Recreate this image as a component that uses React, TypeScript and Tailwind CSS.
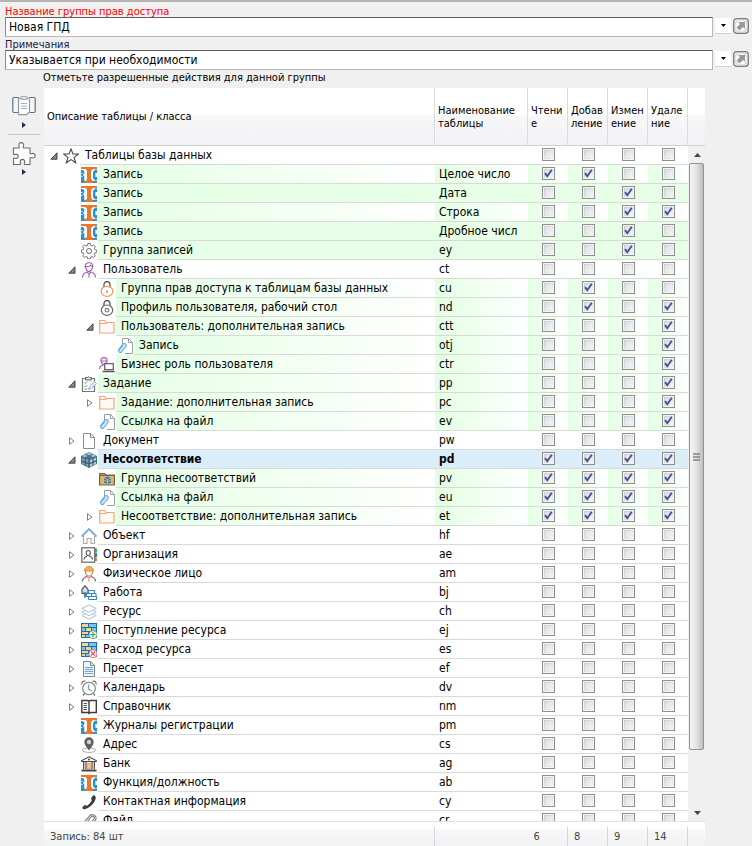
import React, { useState } from 'react';

type IconName =
  | 'star' | 'record' | 'gear' | 'user' | 'lockOpen' | 'lockGear' | 'folder' | 'clipFile'
  | 'role' | 'task' | 'document' | 'cubes' | 'cubeFolder' | 'house' | 'contact' | 'worker'
  | 'work' | 'layers' | 'brickAdd' | 'brickRemove' | 'preset' | 'clock' | 'book' | 'pin'
  | 'bank' | 'phone' | 'clip';

type Fill = 'none' | 'fade' | 'solid' | 'selected';

interface Row {
  level: number;
  node?: 'open' | 'closed';
  icon: IconName;
  name: string;
  code: string;
  checks: string;
  fill?: Fill;
}

const rows: Row[] = [
  { level: 0, node: 'open', icon: 'star', name: 'Таблицы базы данных', code: '', checks: '0000' },
  { level: 1, icon: 'record', name: 'Запись', code: 'Целое число', checks: '1100', fill: 'fade' },
  { level: 1, icon: 'record', name: 'Запись', code: 'Дата', checks: '0010', fill: 'solid' },
  { level: 1, icon: 'record', name: 'Запись', code: 'Строка', checks: '0011', fill: 'fade' },
  { level: 1, icon: 'record', name: 'Запись', code: 'Дробное числ', checks: '0010', fill: 'solid' },
  { level: 1, icon: 'gear', name: 'Группа записей', code: 'ey', checks: '0010', fill: 'solid' },
  { level: 1, node: 'open', icon: 'user', name: 'Пользователь', code: 'ct', checks: '0000' },
  { level: 2, icon: 'lockOpen', name: 'Группа прав доступа к таблицам базы данных', code: 'cu', checks: '0100', fill: 'fade' },
  { level: 2, icon: 'lockGear', name: 'Профиль пользователя, рабочий стол', code: 'nd', checks: '0101', fill: 'fade' },
  { level: 2, node: 'open', icon: 'folder', name: 'Пользователь: дополнительная запись', code: 'ctt', checks: '0001', fill: 'fade' },
  { level: 3, icon: 'clipFile', name: 'Запись', code: 'otj', checks: '0001', fill: 'fade' },
  { level: 2, icon: 'role', name: 'Бизнес роль пользователя', code: 'ctr', checks: '0001', fill: 'fade' },
  { level: 1, node: 'open', icon: 'task', name: 'Задание', code: 'pp', checks: '0001', fill: 'fade' },
  { level: 2, node: 'closed', icon: 'folder', name: 'Задание: дополнительная запись', code: 'pc', checks: '0001', fill: 'fade' },
  { level: 2, icon: 'clipFile', name: 'Ссылка на файл', code: 'ev', checks: '0001', fill: 'fade' },
  { level: 1, node: 'closed', icon: 'document', name: 'Документ', code: 'pw', checks: '0000' },
  { level: 1, node: 'open', icon: 'cubes', name: 'Несоответствие', code: 'pd', checks: '1111', fill: 'selected' },
  { level: 2, icon: 'cubeFolder', name: 'Группа несоответствий', code: 'pv', checks: '1111', fill: 'fade' },
  { level: 2, icon: 'clipFile', name: 'Ссылка на файл', code: 'eu', checks: '1111', fill: 'fade' },
  { level: 2, node: 'closed', icon: 'folder', name: 'Несоответствие: дополнительная запись', code: 'et', checks: '1111', fill: 'fade' },
  { level: 1, node: 'closed', icon: 'house', name: 'Объект', code: 'hf', checks: '0000' },
  { level: 1, node: 'closed', icon: 'contact', name: 'Организация', code: 'ae', checks: '0000' },
  { level: 1, node: 'closed', icon: 'worker', name: 'Физическое лицо', code: 'am', checks: '0000' },
  { level: 1, node: 'closed', icon: 'work', name: 'Работа', code: 'bj', checks: '0000' },
  { level: 1, node: 'closed', icon: 'layers', name: 'Ресурс', code: 'ch', checks: '0000' },
  { level: 1, node: 'closed', icon: 'brickAdd', name: 'Поступление ресурса', code: 'ej', checks: '0000' },
  { level: 1, node: 'closed', icon: 'brickRemove', name: 'Расход ресурса', code: 'es', checks: '0000' },
  { level: 1, node: 'closed', icon: 'preset', name: 'Пресет', code: 'ef', checks: '0000' },
  { level: 1, node: 'closed', icon: 'clock', name: 'Календарь', code: 'dv', checks: '0000' },
  { level: 1, node: 'closed', icon: 'book', name: 'Справочник', code: 'nm', checks: '0000' },
  { level: 1, icon: 'record', name: 'Журналы регистрации', code: 'pm', checks: '0000' },
  { level: 1, icon: 'pin', name: 'Адрес', code: 'cs', checks: '0000' },
  { level: 1, icon: 'bank', name: 'Банк', code: 'ag', checks: '0000' },
  { level: 1, icon: 'record', name: 'Функция/должность', code: 'ab', checks: '0000' },
  { level: 1, icon: 'phone', name: 'Контактная информация', code: 'cy', checks: '0000' },
  { level: 1, icon: 'clip', name: 'Файл', code: 'cr', checks: '0000' },
];

const actions = ['Чтение', 'Добавление', 'Изменение', 'Удаление'];
const indents = ['w-1', 'w-[22px]', 'w-10', 'w-[58px]'];
const fills: Record<Fill, string> = {
  none: 'bg-white',
  fade: 'bg-linear-to-r from-[#e3ffe3] to-white',
  solid: 'bg-[#e6ffe6]',
  selected: 'bg-[#dbedf8]',
};

const bricks = (
  <>
    <rect x="0" y="0" width="16" height="15" fill="#1670b8" />
    <path d="M1 1h6v3H1zM5 5h5v3H5zM1 12h3v2H1z" fill="#f6d584" />
    <path d="M8 1h7v3H8zM1 5h3v3H1zM11 5h4v3h-4zM8 9h7v2H8zM5 12h6v2H5z" fill="#7cc4ee" />
    <path d="M1 9h6v2H1z" fill="#f6d584" />
  </>
);

const pageClip = (
  <>
    <path d="M5.500 9V.5h6l4 4v11H8" fill="#fff" stroke="#9a9fa6" />
    <path d="M11.500.5v4h4" fill="none" stroke="#9a9fa6" />
    <path d="M1 12.500l5-6.500a2 2 0 0 1 3 2.500L4.500 14a1.600 1.600 0 0 1-2.600-1.800L6 7.500" fill="#d3e8f7" stroke="#62a9df" strokeWidth="1.100" />
  </>
);

const art: Record<IconName, React.ReactNode> = {
  star: <path d="M8 1l2 5h5.400l-4.300 3.400 1.600 5.400L8 11.600l-4.700 3.200 1.600-5.400L.6 6H6z" fill="#fff" stroke="#4a4a4a" strokeWidth="1.100" />,
  record: (
    <>
      <rect width="16" height="16" fill="#e8762c" />
      <path d="M0 2h3.500A2.500 2.500 0 0 1 6 4.500v7A2.500 2.500 0 0 1 3.500 14H0z" fill="#fff" />
      <path d="M0 3h1.500L3.300 4v2.500L2 8l1.300 1.500V14L2 15H0z" fill="#2493d4" />
      <path d="M0 6.500h1.500M0 9.500h1.500" stroke="#fff" strokeWidth=".8" />
      <path d="M16 2h-2.500A3.500 3.500 0 0 0 10 5.500v5a3.500 3.500 0 0 0 3.500 3.500H16z" fill="#fff" />
      <path d="M16 2.500h-2l-2 2.500v6l2 2.500h2V10h-1.600V6H16z" fill="#2493d4" />
      <path d="M0 15h4M12 15h4" stroke="#2493d4" strokeWidth="1.600" />
    </>
  ),
  gear: (
    <>
      <path d="M6.700.8h2.600l.4 2 1.500.6 1.700-1.100 1.800 1.800-1.100 1.700.6 1.500 2 .4v2.600l-2 .4-.6 1.500 1.100 1.700-1.800 1.800-1.700-1.100-1.500.6-.4 2H6.700l-.4-2-1.500-.6-1.700 1.100-1.800-1.800 1.100-1.700-.6-1.500-2-.4V7.700l2-.4.6-1.500-1.100-1.700 1.800-1.800 1.700 1.100 1.500-.6z" transform="translate(.5 -.2) scale(.94)" fill="#fff" stroke="#6b6b6b" />
      <circle cx="8" cy="8" r="2.500" fill="none" stroke="#6b6b6b" />
    </>
  ),
  user: (
    <>
      <path d="M4.500 6.500C3.500 2 5.500.7 8 .7s4.500 1.300 3.500 5.800M4.800 4.500c2 .3 4-.3 4.700-1.300.4.800 1 1.200 1.800 1.300M5 6c.5 2.500 1.700 3.500 3 3.500s2.500-1 3-3.500" fill="none" stroke="#a05fb0" strokeWidth="1.100" />
      <path d="M1.500 15.500c0-3.500 1.500-4.500 4.500-5.500l2 2 2-2c3 1 4.500 2 4.500 5.500M8 12v3.500" fill="none" stroke="#a05fb0" strokeWidth="1.100" />
    </>
  ),
  lockOpen: (
    <>
      <path d="M5 6.500V3.500a3 3 0 0 1 6 0v3" fill="none" stroke="#555" strokeWidth="1.300" />
      <ellipse cx="8" cy="10.300" rx="5.900" ry="5" fill="#fff" stroke="#f09560" strokeWidth="1.200" />
      <path d="M8 9v3" stroke="#f09560" strokeWidth="1.500" />
    </>
  ),
  lockGear: (
    <>
      <path d="M5 6V3.500a3 3 0 0 1 6 0V6" fill="none" stroke="#555" strokeWidth="1.300" />
      <ellipse cx="8" cy="10.200" rx="5.700" ry="5.200" fill="#fff" stroke="#666" strokeWidth="1.200" />
      <circle cx="8" cy="10.200" r="1.800" fill="none" stroke="#777" strokeWidth="1.200" />
    </>
  ),
  folder: (
    <>
      <path d="M.7 14V1.500h4.800l1.500 2h8v10.500z" fill="#fffaf6" stroke="#f2a47a" strokeWidth="1.200" />
      <path d="M1 4.500h5.500l1-1h7" fill="none" stroke="#f2a47a" strokeWidth="1.200" />
    </>
  ),
  clipFile: pageClip,
  role: (
    <>
      <path d="M2 5C1.500 1.500 3 .7 5 .7S8.500 1.500 8 5M2 4h6M2.500 5C3 7 4 7.500 5 7.500S7 7 7.500 5M.5 12c0-2.500 1.500-3.500 4-4" fill="none" stroke="#a05fb0" strokeWidth="1.200" />
      <path d="M5.700 6.700h8.600v6H5.700z" fill="#fff" stroke="#666" strokeWidth="1.300" />
      <path d="M3.500 14.500h12.200" stroke="#555" strokeWidth="1.500" />
    </>
  ),
  task: (
    <>
      <path d="M1.500 2.500h12v13h-12z" fill="#fff" stroke="#777" strokeWidth="1.200" />
      <path d="M4.500 1.500h2l1-1 1 1h2v2.500h-6z" fill="#d8d8d8" stroke="#666" />
      <path d="M3.500 6.500l1 1 1.500-2M3.500 10l1 1 1.500-2M3.500 13h2.500" fill="none" stroke="#4fa858" />
      <path d="M7.500 13.500l1-3 5-5 2 2-5 5z" fill="#dcecf9" stroke="#7ba7d4" strokeWidth=".8" />
    </>
  ),
  document: <path d="M2.500.5h7l4 4v11h-11zM9.500.5v4h4" fill="#fff" stroke="#8c8c8c" />,
  cubes: (
    <>
      <path d="M0 4l8-4 8 4v8l-8 4-8-4z" fill="#4b7489" />
      <path d="M1 4l3-1.500L6.500 4 4 5.200zM5 2l3-1.500L11 2 8 3.200zM9.500 4L12 2.500 15 4l-3 1.300z" fill="#a3c5d5" />
      <path d="M1 6l2.800 1v2.500L1 8.500zM5 7l2.500 1v3L5 10zM1 10l2.800 1v2L1 12zM5 11.500l2.500 1v2.500L5 13.800z" fill="#7fa5b8" />
      <path d="M9 8l2.500-1v2.800L9 11zM12.500 6.500L15 5.700v2.500l-2.500 1zM9 12l2.500-1v2.700L9 15zM12.500 10.500L15 9.700v2.500l-2.500 1z" fill="#b4ced9" />
      <path d="M0 9l8 2.500L16 9M4.400 5v8.500M12 5v8.500M8 6v10" stroke="#2f5062" strokeWidth=".6" fill="none" />
    </>
  ),
  cubeFolder: (
    <>
      <path d="M.6 14V2.600h5L7 4h8.400v10z" fill="#e0b866" stroke="#6f6350" strokeWidth="1.200" />
      <path d="M1 4.500h14" stroke="#6f6350" />
      <path d="M5 7l3.500-1.500L12 7v4.500L8.500 13 5 11.500z" fill="#49728a" />
      <path d="M5 7l3.500 1.500L12 7M8.500 8.500V13M5 9.500l3.500 1 3.500-1" stroke="#c5dbe5" strokeWidth=".7" fill="none" />
    </>
  ),
  house: (
    <>
      <path d="M2.500 8v7.500h3.500v-5h4v5h3.500V8" fill="#fff" stroke="#a9a9a9" strokeWidth="1.100" />
      <path d="M.5 8.500L8 1l7.500 7.500" fill="none" stroke="#78addd" strokeWidth="1.800" />
    </>
  ),
  contact: (
    <>
      <path d="M14 1.500h2v4h-2z" fill="#4cae50" />
      <path d="M14 6h2v4h-2z" fill="#2389d0" />
      <path d="M14 10.500h2V14h-2z" fill="#f08a3c" />
      <rect x=".8" y=".8" width="12.900" height="14.400" fill="#fff" stroke="#666" strokeWidth="1.200" />
      <path d="M3 12.500c0-2 1-2.800 3-3.300M11.500 12.500c0-2-1-2.800-3-3.300M5.200 5.500a2 2 0 0 1 4.100 0c0 2-1 3.200-2 3.200s-2.100-1.200-2.100-3.200z" fill="none" stroke="#555" strokeWidth="1.100" />
    </>
  ),
  worker: (
    <>
      <path d="M4.500 5c-.5 3.500 1.500 5 3.500 5s4-1.500 3.500-5" fill="#fff" stroke="#c98d5c" strokeWidth="1.200" />
      <path d="M3.500 5c0-3 2-4.500 4.500-4.500S12.500 2 12.500 5z" fill="#f3b062" stroke="#d98a3a" />
      <path d="M1.300 15.500c.3-3 1.700-4.300 4.700-5M14.700 15.500c-.3-3-1.700-4.300-4.700-5" fill="none" stroke="#666" strokeWidth="1.100" />
      <path d="M6 10.500l2 1.500 2-1.500M8 12v3.500" fill="none" stroke="#ef7f79" strokeWidth="1.200" />
    </>
  ),
  work: (
    <>
      <path d="M4 .8l3 3.500v4H1v-4z" fill="#d5dde2" stroke="#4f5b63" strokeWidth="1.200" />
      <path d="M4 7.500v5" stroke="#4f5b63" strokeWidth="1.600" />
      <path d="M7.500 5.500h6v3h-6zM5.500 8.500h5v3h-5zM10.500 8.500h4.500v3h-4.500zM7.500 11.500h8v3h-8z" fill="#fff" stroke="#2688c9" />
    </>
  ),
  layers: (
    <g fill="#fff" stroke="#a8bfda">
      <path d="M.8 11.500L8 8l7.200 3.500L8 15.200z" />
      <path d="M.8 8L8 4.500 15.200 8 8 11.700z" />
      <path d="M.8 4.500L8 1l7.200 3.500L8 8.200z" />
    </g>
  ),
  brickAdd: (
    <>
      {bricks}
      <circle cx="12" cy="11.700" r="4" fill="#fff" stroke="#5fae74" />
      <path d="M12 9v5.400M9.300 11.700h5.400" stroke="#3da35a" strokeWidth="1.200" />
    </>
  ),
  brickRemove: (
    <>
      {bricks}
      <circle cx="12" cy="11.700" r="4" fill="#fff" stroke="#e57078" />
      <path d="M10 9.700l4 4M14 9.700l-4 4" stroke="#dd4650" strokeWidth="1.200" />
    </>
  ),
  preset: (
    <>
      <path d="M2.500.5h7l4 4v11h-11z" fill="#edf4fb" stroke="#7d8791" />
      <path d="M9.500.5v4h4" fill="none" stroke="#7d8791" />
      <path d="M4 6.500h8M4 8.500h8M4 10.500h8M4 12.500h8" stroke="#6ea5df" strokeWidth="1.200" />
    </>
  ),
  clock: (
    <>
      <path d="M1 4.500C.5 2 2 .8 4.500 1.300M15 4.500C15.500 2 14 .8 11.500 1.300M3.500 13.500L2 15.500M12.500 13.500l1.500 2" fill="none" stroke="#777" strokeWidth="1.300" />
      <circle cx="8" cy="8.500" r="6.300" fill="#fff" stroke="#777" strokeWidth="1.100" />
      <path d="M7.500 4.500v4.500l3 2" fill="none" stroke="#6ba3da" strokeWidth="1.300" />
    </>
  ),
  book: (
    <>
      <path d="M.8 1.500H7l1 1 1-1h6.300v12H9l-1 1-1-1H.8z" fill="#fff" stroke="#3c3c3c" strokeWidth="1.400" />
      <path d="M8 3v11" stroke="#3c3c3c" strokeWidth="1.400" />
      <path d="M2.500 4.500h3.500M2.500 6.500h3.500M2.500 8.500h3.500M2.500 10.500h3.500" stroke="#555" />
    </>
  ),
  pin: (
    <>
      <ellipse cx="8" cy="13.200" rx="6.700" ry="2.200" fill="#fff" stroke="#aaa" />
      <path d="M8 13.500C6 10.500 3.300 8 3.300 5a4.700 4.700 0 0 1 9.400 0c0 3-2.700 5.500-4.700 8.500z" fill="#5b5f63" />
      <circle cx="8" cy="5" r="2.200" fill="#d0d0d0" />
    </>
  ),
  bank: (
    <>
      <path d="M.8 5.500v-1L8 .8l7.200 3.700v1z" fill="#fff" stroke="#444" strokeWidth="1.200" />
      <circle cx="8" cy="3.500" r="1" fill="#444" />
      <path d="M2.700 6v7M5 6v7M11 6v7M13.300 6v7" stroke="#444" strokeWidth="1.200" />
      <path d="M6 7.500h4V13H6z" fill="#f7c98c" stroke="#e59a4a" strokeWidth=".8" />
      <path d="M.5 14.500h15" stroke="#444" strokeWidth="2" />
    </>
  ),
  phone: <path d="M12 1.500c1.500-.8 3 1 2.800 2.500-.8 5-5.500 9.500-11 11.300-1.300.3-2.600-.8-2.500-2l2.500-2.300 2.300.8c2-1.300 3.900-3.500 4.700-5.500l-.8-2z" fill="#3c3c3c" />,
  clip: <path d="M3 12.500L10 4a1.800 1.800 0 0 1 3 2l-7.500 8.500A2.700 2.700 0 0 1 1.500 11L9 2.500a3.600 3.600 0 0 1 5.500 4.500L9 13.500" fill="none" stroke="#777" strokeWidth="1.100" />,
};

function Icon({ name }: { name: IconName }) {
  return (
    <svg viewBox="0 0 16 16" className="size-4 shrink-0" aria-hidden="true">
      {art[name]}
    </svg>
  );
}

function Expander({ node }: { node?: 'open' | 'closed' }) {
  if (!node) return <span className="w-[15px] shrink-0" />;
  return (
    <button type="button" className="flex h-full w-[15px] shrink-0 items-center justify-start pl-0.5">
      <svg viewBox="0 0 8 8" className="size-2" aria-hidden="true">
        {node === 'open' ? (
          <path d="M7 .8v6.400H.8z" fill="#888" stroke="#333" strokeWidth=".9" />
        ) : (
          <path d="M1.500.7v6.600L6 4z" fill="#fff" stroke="#707070" strokeWidth=".9" />
        )}
      </svg>
    </button>
  );
}

function Check({ initial, label }: { initial: boolean; label: string }) {
  const [on, setOn] = useState(initial);
  return (
    <label className="grid size-[13px] place-items-center">
      <input
        type="checkbox"
        aria-label={label}
        checked={on}
        onChange={() => setOn(!on)}
        className="col-start-1 row-start-1 size-[13px] appearance-none border border-[#8e8f8f] bg-linear-to-br from-[#c3c8ce] to-[#f6f6f6] bg-clip-content p-px ring-1 ring-[#f4f4f4] ring-inset"
      />
      <span className="pointer-events-none col-start-1 row-start-1 size-[7px] bg-linear-to-br from-[#dcdfe3] to-[#f3f3f3]" />
      {on && (
        <svg viewBox="0 0 9 9" className="pointer-events-none col-start-1 row-start-1 size-[9px]" aria-hidden="true">
          <path d="M1 4.200l2.300 3L7.800.8" fill="none" stroke="#42529a" strokeWidth="1.900" />
        </svg>
      )}
    </label>
  );
}

function Columns() {
  return (
    <colgroup>
      <col />
      <col className="w-[93px]" />
      <col className="w-10" />
      <col className="w-10" />
      <col className="w-10" />
      <col className="w-10" />
    </colgroup>
  );
}

function TreeRow({ row }: { row: Row }) {
  const fill = fills[row.fill ?? 'none'];
  const weight = row.fill === 'selected' ? 'font-bold' : '';
  return (
    <tr className={`h-[19px] ${weight}`}>
      <td className="p-0">
        <div className="flex h-[19px] items-center">
          <span className={`${indents[row.level]} shrink-0`} />
          <Expander node={row.node} />
          <Icon name={row.icon} />
          <span className={`ml-px flex h-full min-w-0 flex-1 items-center truncate border-b border-[#d9d9d9] pl-[5px] ${fill}`}>
            {row.name}
          </span>
        </div>
      </td>
      <td className={`overflow-hidden border-b border-[#d9d9d9] p-0 pl-1 whitespace-nowrap ${fill}`}>{row.code}</td>
      {actions.map((action, i) => (
        <td key={action} className={`border-b border-[#d9d9d9] p-0 ${fill}`}>
          <div className="flex h-[18px] items-center justify-center pb-px">
            <Check initial={row.checks[i] === '1'} label={`${row.name}: ${action}`} />
          </div>
        </td>
      ))}
    </tr>
  );
}

function Field({ id, label, value, tone }: { id: string; label: string; value: string; tone: string }) {
  return (
    <div className="flex h-[33px] flex-col">
      <label htmlFor={id} className={`h-3 text-[11px] leading-[14px] ${tone}`}>
        {label}
      </label>
      <div className="flex h-5 gap-0.5">
        <input
          id={id}
          defaultValue={value}
          className="h-5 min-w-0 flex-1 border border-[#b8b8b8] border-t-[#5f5f5f] border-l-[#8a8a8a] bg-white px-[3px] text-xs outline-none"
        />
        <div className="flex gap-0.5 pt-px">
          <button type="button" aria-label="Список" className="flex h-4 w-4 items-center justify-center border-b border-[#d0d0d0] bg-white">
            <svg viewBox="0 0 5 3" className="h-[3px] w-[5px]" aria-hidden="true">
              <path d="M0 0h5L2.500 3z" fill="#000" />
            </svg>
          </button>
          <button type="button" aria-label="Открыть" className="size-4">
            <svg viewBox="0 0 16 16" className="size-4" aria-hidden="true">
              <rect x=".7" y=".7" width="14.600" height="14.600" rx="3" fill="#ececec" stroke="#7c7c7c" strokeWidth="1.300" />
              <circle cx="8" cy="8" r="6.300" fill="#fbfbfb" stroke="#c4c4c4" />
              <path d="M5 4h7v7L10 9l-3.500 3.500-3-3L7 6z" fill="#9a9a9a" />
            </svg>
          </button>
        </div>
      </div>
    </div>
  );
}

function SideArrow() {
  return (
    <svg viewBox="0 0 4 6" className="h-1.5 w-1" aria-hidden="true">
      <path d="M0 0l4 3-4 3z" fill="#1d3350" />
    </svg>
  );
}

function SideTools() {
  return (
    <nav className="flex w-11 shrink-0 flex-col items-center pt-2 pr-1 pl-2">
      <button type="button" aria-label="Копировать" className="flex h-[38px] flex-col items-center gap-1.5">
        <svg viewBox="0 0 24 20" className="h-5 w-6" aria-hidden="true">
          <path d="M7 1.500H2A1.200 1.200 0 0 0 .8 2.700v12.600A1.200 1.200 0 0 0 2 16.500h4M17 1.500h5a1.200 1.200 0 0 1 1.200 1.200v12.600a1.200 1.200 0 0 1-1.200 1.200h-4" fill="#f8f8f8" stroke="#5e7482" strokeWidth="1.200" />
          <path d="M7.500 2.500h9a1 1 0 0 1 1 1V16l-3 2.700h-7a1 1 0 0 1-1-1V3.500a1 1 0 0 1 1-1z" fill="#fff" stroke="#8799a3" strokeWidth="1.200" />
          <path d="M9 .8h6v2.400H9z" fill="#fff" stroke="#8799a3" />
          <path d="M9 7.500h6M9 10h6M9 12.500h6" stroke="#a3afb7" />
        </svg>
        <SideArrow />
      </button>
      <hr className="w-full border-t border-[#c9c9c9]" />
      <button type="button" aria-label="Расширения" className="mt-[7px] flex flex-col items-center gap-[3px]">
        <svg viewBox="0 0 24 24" className="size-6" aria-hidden="true">
          <path d="M1.500 6H7c.8-.6.5-1.200.1-1.900a2.400 2.400 0 1 1 4.300 0c-.4.700-.7 1.300.1 1.900h6.500v5.500c.6.800 1.200.5 1.900.1a2.300 2.300 0 1 1 0 4.200c-.7-.4-1.300-.7-1.900.1v6.600h-5.300c-.9-.6-.5-1.200-.1-1.900a2.300 2.300 0 1 0-4.200 0c.4.700.7 1.300-.1 1.900H1.500v-6c.6-.8 1.200-.5 1.900-.1a2.200 2.200 0 1 0 0-4.200c-.7.400-1.300.7-1.900-.1z" fill="#fff" stroke="#6a6a6a" strokeWidth="1.100" />
        </svg>
        <SideArrow />
      </button>
    </nav>
  );
}

function ScrollBar() {
  return (
    <div className="flex w-[17px] shrink-0 flex-col bg-[#f0f0f0] pl-px">
      <button type="button" aria-label="Вверх" className="flex h-[17px] items-center justify-center">
        <svg viewBox="0 0 7 4" className="h-1 w-[7px]" aria-hidden="true">
          <path d="M3.500 0L7 4H0z" fill="#444" />
        </svg>
      </button>
      <div className="mr-px flex h-[87%] shrink-0 items-center justify-center rounded-[2px] border border-[#929292] bg-linear-to-r from-[#f5f5f5] via-[#e4e4e6] to-[#bcbdc0]">
        <svg viewBox="0 0 7 8" className="h-2 w-[7px]" aria-hidden="true">
          <path d="M0 1h7M0 4h7M0 7h7" stroke="#555" />
        </svg>
      </div>
      <span className="flex-1" />
      <button type="button" aria-label="Вниз" className="flex h-[17px] items-center justify-center">
        <svg viewBox="0 0 7 4" className="h-1 w-[7px]" aria-hidden="true">
          <path d="M3.500 4L7 0H0z" fill="#444" />
        </svg>
      </button>
    </div>
  );
}

function PermissionGrid() {
  const head = 'overflow-hidden border-r border-[#dcdcde] p-0 text-left align-middle font-normal';
  const foot = 'border-r border-[#d4d5d8] p-0 pl-1.5';
  return (
    <div className="flex min-h-0 min-w-0 flex-1 flex-col bg-white">
      <div className="flex h-[58px] shrink-0 border-b border-[#cfcfcf] bg-linear-to-b from-white from-45% via-[#f7f7f8] via-50% to-[#f1f2f4]">
        <table className="h-full min-w-0 flex-1 table-fixed border-collapse text-[11px] leading-[13px]">
          <Columns />
          <thead>
            <tr>
              <th className={`${head} pl-[3px]`}>Описание таблицы / класса</th>
              <th className={`${head} pl-[3px]`}>Наименование таблицы</th>
              {actions.map((action) => (
                <th key={action} className={`${head} pl-[3px] break-all`}>{action}</th>
              ))}
            </tr>
          </thead>
        </table>
        <span className="w-[17px] shrink-0" />
      </div>
      <div className="flex min-h-0 flex-1 border-b border-[#e2e2e2]">
        <div className="min-w-0 flex-1 overflow-y-auto [scrollbar-width:none]">
          <table className="w-full table-fixed border-separate border-spacing-0 text-xs leading-[18px]">
            <Columns />
            <tbody>
              {rows.map((row, i) => (
                <TreeRow key={i} row={row} />
              ))}
            </tbody>
          </table>
        </div>
        <ScrollBar />
      </div>
      <div className="flex h-6 shrink-0 bg-linear-to-b from-white from-30% via-[#f7f7f8] via-35% to-[#f1f2f4] pt-[5px]">
        <table className="h-full min-w-0 flex-1 table-fixed border-collapse text-[11px] leading-[13px] text-[#444]">
          <Columns />
          <tfoot>
            <tr>
              <td className={foot}>Запись: 84 шт</td>
              <td className="p-0" />
              <td className={foot}>6</td>
              <td className={foot}>8</td>
              <td className={foot}>9</td>
              <td className={foot}>14</td>
            </tr>
          </tfoot>
        </table>
        <span className="w-[17px] shrink-0" />
      </div>
    </div>
  );
}

export default function App() {
  return (
    <main className="flex h-screen flex-col border-t-2 border-[#b4b4b4] bg-[#f0f0f0] font-['DejaVu_Sans_Condensed','DejaVu_Sans',sans-serif] text-black">
      <form className="shrink-0 pt-[3px] pr-[3px] pl-[5px]">
        <Field id="group-name" label="Название группы прав доступа" value="Новая ГПД" tone="text-[#ff0000]" />
        <Field id="group-note" label="Примечания" value="Указывается при необходимости" tone="text-[#1a1a4a]" />
      </form>
      <p className="h-[17px] shrink-0 pl-[43px] text-[11px] leading-[13px]">Отметьте разрешенные действия для данной группы</p>
      <div className="flex min-h-0 flex-1 pr-[47px]">
        <SideTools />
        <PermissionGrid />
      </div>
    </main>
  );
}
